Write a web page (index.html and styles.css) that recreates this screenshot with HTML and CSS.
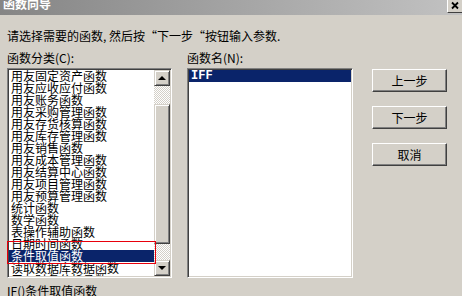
FILE: index.html
```html
<!DOCTYPE html>
<html lang="zh">
<head>
<meta charset="utf-8">
<title>函数向导</title>
<link rel="stylesheet" href="styles.css">
</head>
<body>
<div class="dialog">
  <div class="titlebar">
    <span class="title">函数向导</span>
    <span class="close"><svg width="14" height="12" viewBox="0 0 14 12"><path d="M4 2.5 L10 8.5 M10 2.5 L4 8.5" stroke="#000" stroke-width="1.8" fill="none"/></svg></span>
  </div>
  <div class="intro">请选择需要的函数, 然后按“下一步“按钮输入参数.</div>
  <div class="main">
    <div class="col col-left">
      <div class="label">函数分类(C):</div>
      <div class="listbox">
        <div class="list">
          <div class="row">用友固定资产函数</div>
          <div class="row">用友应收应付函数</div>
          <div class="row">用友账务函数</div>
          <div class="row">用友采购管理函数</div>
          <div class="row">用友存货核算函数</div>
          <div class="row">用友库存管理函数</div>
          <div class="row">用友销售函数</div>
          <div class="row">用友成本管理函数</div>
          <div class="row">用友结算中心函数</div>
          <div class="row">用友项目管理函数</div>
          <div class="row">用友预算管理函数</div>
          <div class="row">统计函数</div>
          <div class="row">数学函数</div>
          <div class="row">表操作辅助函数</div>
          <div class="row">日期时间函数</div>
          <div class="row selected">条件取值函数</div>
          <div class="row">读取数据库数据函数</div>
          <div class="row">用友财务分析函数</div>
        </div>
        <div class="scrollbar">
          <div class="sb-btn"><span class="arrow-up"></span></div>
          <div class="sb-track sb-track-top"></div>
          <div class="sb-thumb"></div>
          <div class="sb-track sb-track-bottom"></div>
          <div class="sb-btn"><span class="arrow-down"></span></div>
        </div>
      </div>
      <div class="annotation"></div>
    </div>
    <div class="col col-mid">
      <div class="label">函数名(N):</div>
      <div class="listbox">
        <div class="list">
          <div class="row selected mono">IFF</div>
        </div>
      </div>
    </div>
    <div class="buttons">
      <button class="btn">上一步</button>
      <button class="btn">下一步</button>
      <button class="btn">取消</button>
    </div>
  </div>
  <div class="desc">IF()条件取值函数</div>
</div>
</body>
</html>
```

FILE: styles.css
```css
html, body {
  margin: 0;
  padding: 0;
}
body {
  width: 462px;
  height: 296px;
  overflow: hidden;
  background: #d4d0c8;
  font-family: "Noto Sans CJK SC", "Liberation Sans", sans-serif;
  font-size: 12px;
  color: #000;
}
.dialog {
  display: flex;
  flex-direction: column;
}
.titlebar {
  height: 15px;
  display: flex;
  justify-content: space-between;
  align-items: flex-start;
  overflow: hidden;
  background: linear-gradient(to right, #858585, #c2c2c2);
}
.title {
  color: #fff;
  font-weight: bold;
  line-height: 12px;
  margin-top: -2px;
  padding-left: 3px;
}
.close {
  width: 14px;
  height: 12px;
  background: #d4d0c8;
  border-left: 1px solid #fff;
  border-bottom: 1px solid #404040;
  display: flex;
}
.intro {
  margin-top: 15px;
  padding-left: 7px;
  line-height: 12px;
  height: 12px;
  white-space: nowrap;
}
.main {
  display: flex;
  margin-top: 10px;
  padding-left: 7px;
}
.col {
  display: flex;
  flex-direction: column;
  width: 165px;
}
.col-left {
  position: relative;
}
.col-mid {
  margin-left: 15px;
  width: 166px;
}
.label {
  line-height: 12px;
  height: 12px;
  white-space: nowrap;
}
.listbox {
  margin-top: 4px;
  height: 210px;
  box-sizing: border-box;
  border: 1px solid;
  border-color: #808080 #fff #fff #808080;
  box-shadow: inset 1px 1px #404040, inset -1px -1px #d4d0c8;
  background: #fff;
  padding: 1px;
  display: flex;
  overflow: hidden;
}
.list {
  flex: 1;
  overflow: hidden;
  display: flex;
  flex-direction: column;
}
.row {
  height: 12px;
  line-height: 12px;
  padding-left: 2px;
  white-space: nowrap;
  flex-shrink: 0;
}
.row.selected {
  background: #0a246a;
  color: #fff;
}
.row.mono {
  font-family: "Liberation Mono", monospace;
  font-weight: bold;
  padding-left: 2px;
}
.scrollbar {
  width: 16px;
  display: flex;
  flex-direction: column;
}
.sb-btn, .sb-thumb {
  box-sizing: border-box;
  background: #d4d0c8;
  border: 1px solid;
  border-color: #d4d0c8 #404040 #404040 #d4d0c8;
  box-shadow: inset 1px 1px #fff, inset -1px -1px #808080;
}
.sb-btn {
  height: 16px;
  display: flex;
  align-items: center;
  justify-content: center;
}
.arrow-up, .arrow-down {
  width: 0;
  height: 0;
  border-left: 4px solid transparent;
  border-right: 4px solid transparent;
}
.arrow-up {
  border-bottom: 4px solid #000;
}
.arrow-down {
  border-top: 4px solid #000;
}
.sb-track {
  background: repeating-conic-gradient(#fff 0 25%, #d4d0c8 0 50%) 0 0 / 2px 2px;
}
.sb-track-top {
  height: 18px;
}
.sb-thumb {
  height: 140px;
}
.sb-track-bottom {
  height: 16px;
}
.annotation {
  position: absolute;
  left: 0;
  top: 189px;
  width: 149px;
  height: 23px;
  box-sizing: border-box;
  border: 1px solid #e8000b;
}
.buttons {
  margin-left: 19px;
  padding-top: 17px;
  display: flex;
  flex-direction: column;
  gap: 14px;
}
.btn {
  width: 75px;
  height: 23px;
  box-sizing: border-box;
  padding: 0;
  margin: 0;
  background: #d4d0c8;
  border: 1px solid;
  border-color: #fff #404040 #404040 #fff;
  box-shadow: inset -1px -1px #808080;
  font-family: "Noto Sans CJK SC", sans-serif;
  font-size: 12px;
  line-height: 12px;
  color: #000;
}
.desc {
  margin-top: 7px;
  padding-left: 7px;
  line-height: 12px;
  white-space: nowrap;
}
```
